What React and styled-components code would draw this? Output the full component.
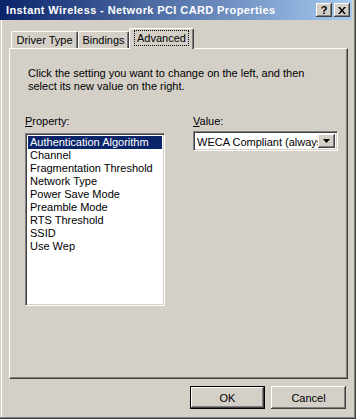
import React from "react";
import styled, { createGlobalStyle } from "styled-components";

const GlobalStyle = createGlobalStyle`
  html, body {
    margin: 0;
    padding: 0;
    background: #d4d0c8;
  }
  * {
    box-sizing: border-box;
  }
`;

const Window = styled.div`
  width: 356px;
  height: 419px;
  display: flex;
  flex-direction: column;
  background: #d4d0c8;
  font-family: "Liberation Sans", Arial, sans-serif;
  font-size: 11px;
  color: #000;
  box-shadow: inset -1px -1px #404040, inset -2px -2px #808080, inset 1px 0 #d4d0c8,
    inset 2px 0 #fff;
`;

const TitleBar = styled.div`
  height: 20px;
  margin-right: 4px;
  display: flex;
  align-items: center;
  padding: 0 2px 0 6px;
  background: linear-gradient(to right, #0a246a, #a6caf0);
`;

const Title = styled.div`
  flex: 1;
  color: #fff;
  font-weight: bold;
  font-size: 11px;
  letter-spacing: 0.4px;
  white-space: nowrap;
`;

const CaptionButton = styled.div`
  width: 16px;
  height: 14px;
  margin-left: ${(p) => (p.$gap ? "2px" : "0")};
  background: #d4d0c8;
  display: flex;
  align-items: center;
  justify-content: center;
  box-shadow: inset -1px -1px #404040, inset 1px 1px #fff, inset -2px -2px #808080;
  font-weight: bold;
  font-size: 11px;
  line-height: 1;
`;

const Body = styled.div`
  flex: 1;
  display: flex;
  flex-direction: column;
  padding-left: 9px;
`;

const TabStrip = styled.div`
  display: flex;
  align-items: flex-end;
  margin-top: 8px;
  padding-left: 2px;
  height: 20px;
`;

const Tab = styled.div`
  position: relative;
  z-index: ${(p) => (p.$active ? 1 : 0)};
  width: ${(p) => p.$w}px;
  height: ${(p) => (p.$active ? 21 : 17)}px;
  margin-bottom: ${(p) => (p.$active ? "-1px" : "0")};
  display: flex;
  align-items: center;
  justify-content: center;
  padding-bottom: ${(p) => (p.$active ? "2px" : "0")};
  background: #d4d0c8;
  border-top: 1px solid #fff;
  border-left: 1px solid #fff;
  border-right: 1px solid #404040;
  border-radius: 2px 2px 0 0;
  box-shadow: inset -1px 0 #808080;
  white-space: nowrap;
`;

const FocusText = styled.span`
  outline: 1px dotted #000;
  padding: 1px 2px;
`;

const Panel = styled.div`
  width: 339px;
  height: 331px;
  border-top: 1px solid #fff;
  border-left: 1px solid #fff;
  border-right: 1px solid #404040;
  border-bottom: 1px solid #404040;
  box-shadow: inset -1px -1px #808080;
  padding: 18px 0 0 15px;
  display: flex;
  flex-direction: column;
`;

const Description = styled.p`
  margin: 0 0 0 3px;
  line-height: 13px;
`;

const Columns = styled.div`
  display: flex;
  gap: 28px;
  margin-top: 22px;
`;

const Column = styled.div`
  width: ${(p) => p.$w}px;
  display: flex;
  flex-direction: column;
`;

const Label = styled.div`
  line-height: 13px;
  margin-bottom: ${(p) => p.$gap}px;
`;

const Key = styled.span`
  text-decoration: underline;
`;

const Sunken = styled.div`
  background: #fff;
  border-top: 1px solid #808080;
  border-left: 1px solid #808080;
  border-right: 1px solid #fff;
  border-bottom: 1px solid #fff;
  box-shadow: inset 1px 1px #404040, inset -1px -1px #d4d0c8;
`;

const ListBox = styled(Sunken)`
  height: 173px;
  padding: 2px;
  display: flex;
  flex-direction: column;
`;

const ListItem = styled.div`
  height: 13px;
  line-height: 13px;
  padding-left: 2px;
  white-space: nowrap;
  background: ${(p) => (p.$selected ? "#0a246a" : "transparent")};
  color: ${(p) => (p.$selected ? "#fff" : "#000")};
`;

const Combo = styled(Sunken)`
  height: 20px;
  padding: 2px;
  display: flex;
  align-items: stretch;
`;

const ComboText = styled.div`
  flex: 1;
  overflow: hidden;
  white-space: nowrap;
  line-height: 16px;
  padding-left: 1px;
`;

const DropButton = styled.div`
  width: 17px;
  background: #d4d0c8;
  display: flex;
  align-items: center;
  justify-content: center;
  box-shadow: inset -1px -1px #404040, inset 1px 1px #fff, inset -2px -2px #808080;
`;

const Footer = styled.div`
  display: flex;
  justify-content: flex-end;
  gap: 6px;
  margin-top: 7px;
  width: 339px;
  padding-right: 2px;
`;

const Button = styled.button`
  width: 75px;
  height: 23px;
  padding: 0;
  font-family: "Liberation Sans", Arial, sans-serif;
  font-size: 11px;
  color: #000;
  background: #d4d0c8;
  border: ${(p) => (p.$default ? "1px solid #000" : "none")};
  box-shadow: inset -1px -1px #404040, inset 1px 1px #fff, inset -2px -2px #808080,
    inset 2px 2px #d4d0c8;
`;

const properties = [
  "Authentication Algorithm",
  "Channel",
  "Fragmentation Threshold",
  "Network Type",
  "Power Save Mode",
  "Preamble Mode",
  "RTS Threshold",
  "SSID",
  "Use Wep",
];

export default function App() {
  return (
    <>
      <GlobalStyle />
      <Window>
        <TitleBar>
          <Title>Instant Wireless - Network PCI CARD Properties</Title>
          <CaptionButton>?</CaptionButton>
          <CaptionButton $gap>
            <svg width="8" height="7" viewBox="0 0 8 7">
              <path d="M0 0h2l2 2.5L6 0h2L5 3.5 8 7H6L4 4.5 2 7H0l3-3.5z" fill="#000" />
            </svg>
          </CaptionButton>
        </TitleBar>
        <Body>
          <TabStrip>
            <Tab $w={67}>Driver Type</Tab>
            <Tab $w={51}>Bindings</Tab>
            <Tab $w={65} $active>
              <FocusText>Advanced</FocusText>
            </Tab>
          </TabStrip>
          <Panel>
            <Description>
              Click the setting you want to change on the left, and then
              <br />
              select its new value on the right.
            </Description>
            <Columns>
              <Column $w={140}>
                <Label $gap={5}>
                  <Key>P</Key>roperty:
                </Label>
                <ListBox>
                  {properties.map((p, i) => (
                    <ListItem key={p} $selected={i === 0}>
                      {p}
                    </ListItem>
                  ))}
                </ListBox>
              </Column>
              <Column $w={145}>
                <Label $gap={3}>
                  <Key>V</Key>alue:
                </Label>
                <Combo>
                  <ComboText>WECA Compliant (always</ComboText>
                  <DropButton>
                    <svg width="7" height="4" viewBox="0 0 7 4">
                      <path d="M0 0h7L3.5 4z" fill="#000" />
                    </svg>
                  </DropButton>
                </Combo>
              </Column>
            </Columns>
          </Panel>
          <Footer>
            <Button $default>OK</Button>
            <Button>Cancel</Button>
          </Footer>
        </Body>
      </Window>
    </>
  );
}
